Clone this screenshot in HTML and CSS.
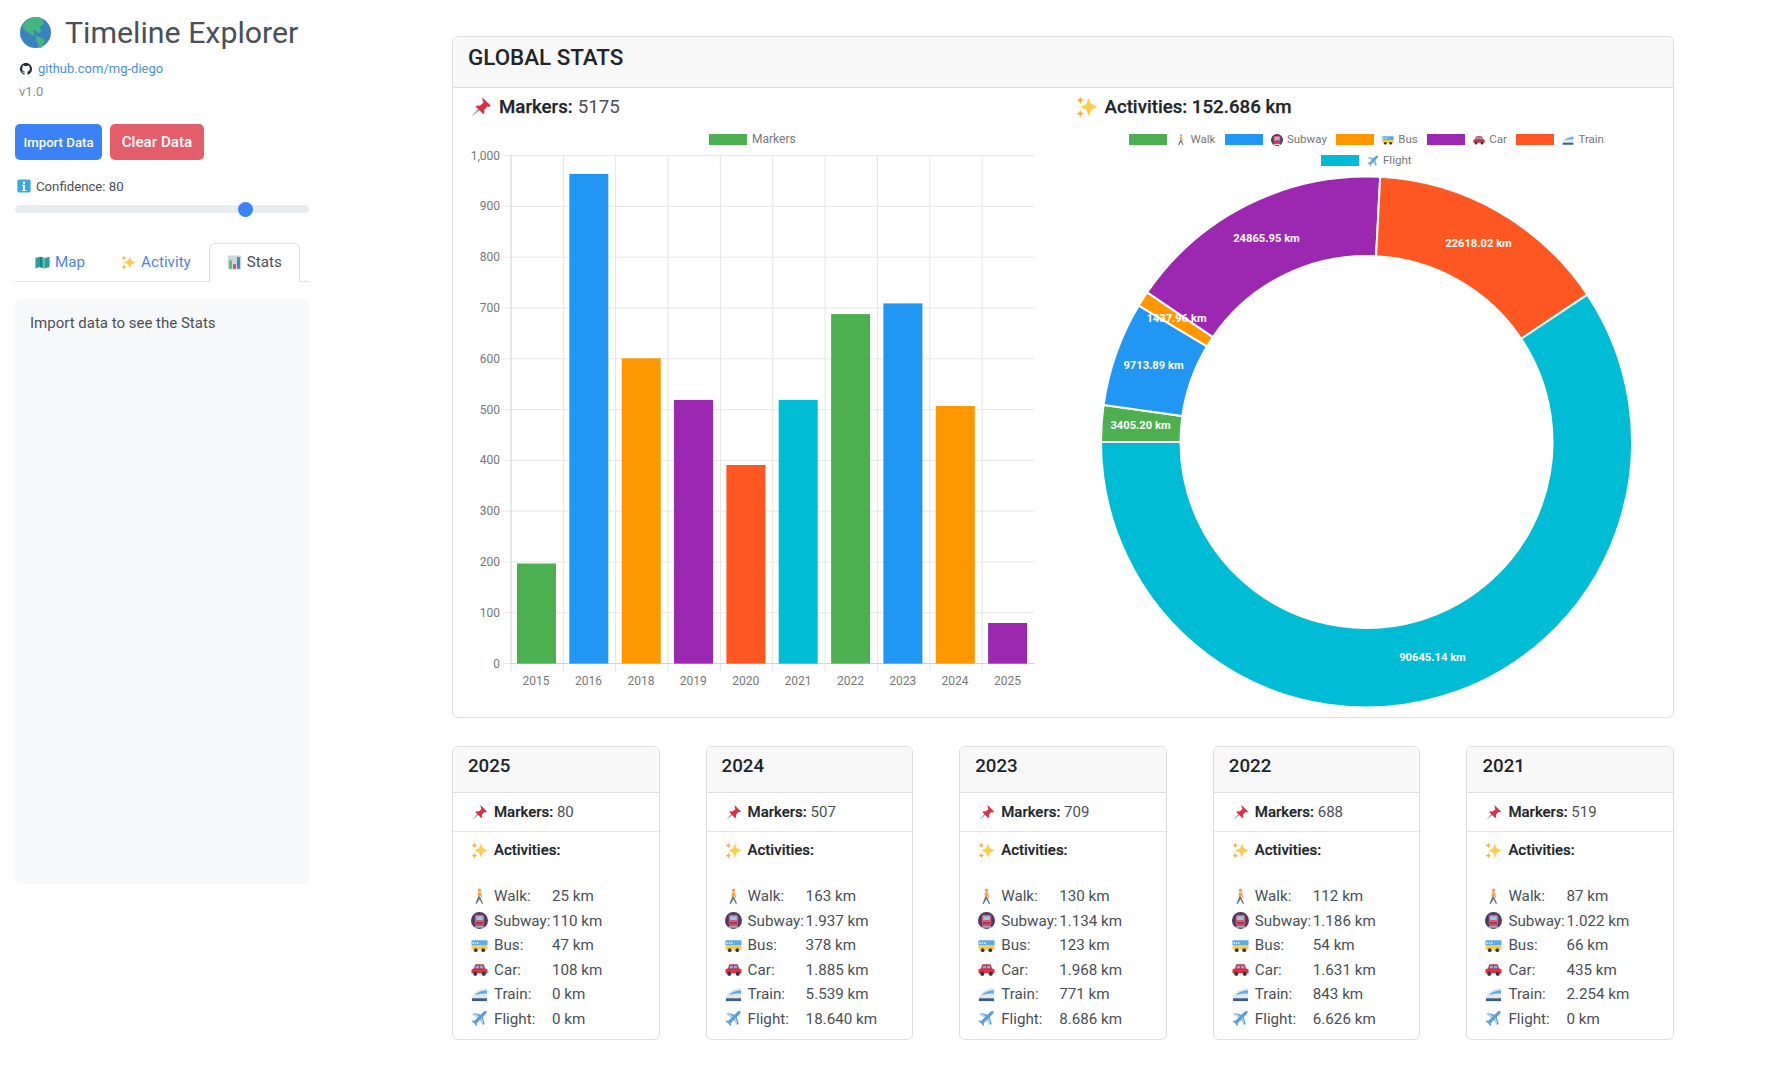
FILE: index.html
```html
<!DOCTYPE html>
<html lang="en">
<head>
<meta charset="utf-8">
<title>Timeline Explorer</title>
<link rel="stylesheet" href="styles.css">
</head>
<body>
<svg class="defs" aria-hidden="true">
  <symbol id="globe" viewBox="0 0 36 36">
    <circle cx="18" cy="18" r="18" fill="#3882c0"/>
    <path d="M8 3.500C11 1.300 15 0 18 0c3 0 6 .8 9 2.500l-1 2.500 2 1-1 3-3 1-1 3 2 3-3 3-2-.5-1-2.500-3-1-1 2 2 2-1 3-3-1-3-3-4-2-2-3-1-3 2-3z" fill="#43b581"/>
    <path d="M18 22l4 1 5 2 2 3-2 3-1 4-3 1-2-5-2-4z" fill="#43b581"/>
  </symbol>
  <symbol id="pin" viewBox="0 0 36 36">
    <path d="M2 34l13-15 3 3z" fill="#99aab5"/>
    <path d="M20 2l14 14-3 2-3-1-5 6c1 3 1 5-1 7L9 17c2-2 4-2 7-1l6-5-1-3z" fill="#dd2e44"/>
  </symbol>
  <symbol id="spark" viewBox="0 0 36 36">
    <path d="M21 3l4 10 10 5-10 5-4 10-4-10-10-5 10-5z" fill="#ffcc4d"/>
    <path d="M7 1l1.800 4.200L13 7 8.800 8.800 7 13 5.200 8.800 1 7l4.200-1.800z" fill="#ffac33"/>
    <path d="M7 23l1.800 4.200L13 29l-4.200 1.800L7 35l-1.800-4.200L1 29l4.200-1.800z" fill="#ffac33"/>
  </symbol>
  <symbol id="walk" viewBox="0 0 36 36">
    <circle cx="18" cy="4.500" r="3.500" fill="#e8a15c"/>
    <path d="M15 9h6l3 11-2 1-2-5-1 3-4 0-1-4z" fill="#f4a34c"/>
    <path d="M15.500 18l4 1 6 14-2.500 1-5-10-6 10-2.500-1z" fill="#66757f"/>
  </symbol>
  <symbol id="subway" viewBox="0 0 36 36">
    <circle cx="18" cy="18" r="18" fill="#4b3a63"/>
    <rect x="8" y="6" width="20" height="23" rx="4" fill="#dd5a72"/>
    <rect x="11" y="9" width="14" height="8" rx="1.500" fill="#8ccaf0"/>
    <rect x="10" y="21" width="16" height="5" fill="#a33a58"/>
    <path d="M9 30h18l2 3H7z" fill="#ccd6dd"/>
  </symbol>
  <symbol id="bus" viewBox="0 0 36 36">
    <rect x="1" y="7" width="34" height="11" rx="2" fill="#55acee"/>
    <path d="M3 11h3v4H3zM8 11h3v4H8zM13 11h3v4h-3z" fill="#e1f0fb"/>
    <path d="M1 18h34v7a2 2 0 0 1-2 2H3a2 2 0 0 1-2-2z" fill="#ffc83d"/>
    <circle cx="10" cy="28" r="4" fill="#31373d"/>
    <circle cx="26" cy="28" r="4" fill="#31373d"/>
  </symbol>
  <symbol id="car" viewBox="0 0 36 36">
    <path d="M8 10c.500-2 2-3 4-3h12c2 0 3.500 1 4 3l2 7H6z" fill="#c5304a"/>
    <path d="M11 10h6v6h-8zM19 10h6l2 6h-8z" fill="#7ab8e6"/>
    <path d="M1 20c0-2 2-4 5-4h24c3 0 5 2 5 4v6H1z" fill="#dd2e44"/>
    <circle cx="9" cy="27" r="4.500" fill="#31373d"/>
    <circle cx="27" cy="27" r="4.500" fill="#31373d"/>
  </symbol>
  <symbol id="train" viewBox="0 0 36 36">
    <path d="M2 26C3 15 14 6 34 5v21z" fill="#e1e8ed"/>
    <path d="M10 17c5-4 13-7 24-8v7c-10 0-17 1-24 3z" fill="#55acee"/>
    <path d="M2 26h32v6H2z" fill="#3b5c85"/>
  </symbol>
  <symbol id="plane" viewBox="0 0 36 36">
    <path d="M33 3c-2-2-5-1-7 1l-6 6L6 6 3 9l11 7-7 7-4-1-2 2 6 4 4 6 2-2-1-4 7-7 7 11 3-3-4-14 6-6c2-2 3-5 2-7z" fill="#5b9fd8"/>
    <path d="M6 6L3 9l11 7 3-3zM23 30l3-3-3-10-3 3z" fill="#bcd7ec"/>
  </symbol>
  <symbol id="map" viewBox="0 0 36 36">
    <path d="M1 7l11-3 12 3 11-3v25l-11 3-12-3-11 3z" fill="#2a9d9e"/>
    <path d="M12 4l6 2v26l-6-3z" fill="#1f7f87"/>
    <path d="M18 6l6 1v25l-6 0z" fill="#5cbdb2"/>
  </symbol>
  <symbol id="chart" viewBox="0 0 36 36">
    <rect x="2" y="1" width="32" height="34" rx="2" fill="#ccd6dd"/>
    <rect x="5" y="13" width="7" height="20" fill="#5dc26f"/>
    <rect x="14.500" y="22" width="7" height="11" fill="#e0457b"/>
    <rect x="24" y="5" width="7" height="28" fill="#3b88c3"/>
  </symbol>
  <symbol id="info" viewBox="0 0 36 36">
    <rect x="1" y="1" width="34" height="34" rx="4" fill="#3aa7e0"/>
    <circle cx="18" cy="9.500" r="3.200" fill="#fff"/>
    <path d="M13 15h7.500v13H24v3H12v-3h3.500V18H13z" fill="#fff"/>
  </symbol>
  <symbol id="github" viewBox="0 0 16 16">
    <path fill="#24292e" d="M8 0C3.580 0 0 3.580 0 8c0 3.540 2.290 6.530 5.470 7.590.400.070.550-.170.550-.380 0-.190-.010-.820-.010-1.490-2.010.370-2.530-.490-2.690-.940-.090-.230-.480-.940-.820-1.130-.280-.150-.680-.520-.010-.530.630-.010 1.080.580 1.230.820.720 1.210 1.870.870 2.330.660.070-.520.280-.870.510-1.070-1.780-.200-3.640-.890-3.640-3.950 0-.870.310-1.590.820-2.150-.080-.200-.360-1.020.080-2.120 0 0 .670-.210 2.200.820.640-.180 1.320-.270 2-.270.680 0 1.360.090 2 .270 1.530-1.040 2.200-.820 2.200-.820.440 1.100.160 1.920.080 2.120.510.560.820 1.270.820 2.150 0 3.070-1.870 3.750-3.650 3.950.290.250.540.730.540 1.480 0 1.070-.010 1.930-.010 2.200 0 .210.150.460.550.380A8.013 8.013 0 0 0 16 8c0-4.420-3.580-8-8-8z"/>
  </symbol>
</svg>

<div class="page">
  <aside class="sidebar">
    <h1 class="title"><svg class="globe"><use href="#globe"/></svg>Timeline Explorer</h1>
    <div class="gh"><svg class="gh-ico"><use href="#github"/></svg><a href="#">github.com/mg-diego</a></div>
    <div class="version">v1.0</div>
    <div class="buttons">
      <button class="btn btn-import">Import Data</button>
      <button class="btn btn-clear">Clear Data</button>
    </div>
    <div class="conf"><svg class="conf-ico"><use href="#info"/></svg>Confidence: 80</div>
    <input class="range" type="range" min="0" max="100" value="80">
    <nav class="tabs">
      <a class="tab" href="#"><svg class="tab-ico"><use href="#map"/></svg>Map</a>
      <a class="tab" href="#"><svg class="tab-ico"><use href="#spark"/></svg>Activity</a>
      <a class="tab active" href="#"><svg class="tab-ico"><use href="#chart"/></svg>Stats</a>
    </nav>
    <div class="panel">Import data to see the Stats</div>
  </aside>

  <main class="main">
    <section class="card global">
      <h2 class="global-head">GLOBAL STATS</h2>
      <div class="global-body">
        <div class="col">
          <h3 class="stat"><svg class="stat-ico"><use href="#pin"/></svg><b>Markers:</b><span class="soft">5175</span></h3>
          <svg class="bars" viewBox="470 128 582 572" role="img" aria-label="Markers per year">
            <g class="grid">
              <path d="M503 155.600H1034.500M503 206.400H1034.500M503 257.200H1034.500M503 308H1034.500M503 358.800H1034.500M503 409.600H1034.500M503 460.400H1034.500M503 511.200H1034.500M503 562H1034.500M503 612.800H1034.500M503 663.600H511"/>
              <path d="M563.350 155.600V671.600M615.700 155.600V671.600M668.050 155.600V671.600M720.400 155.600V671.600M772.750 155.600V671.600M825.100 155.600V671.600M877.450 155.600V671.600M929.800 155.600V671.600M982.150 155.600V671.600M511 663.600V671.600"/>
            </g>
            <path class="axis" d="M511 155.600V663.600H1034.500"/>
            <rect class="c1" x="709" y="134" width="38" height="11"/>
            <text class="lbl" x="752" y="143">Markers</text>
            <rect class="c1" x="517" y="563.500" width="39" height="100.100"/>
            <rect class="c2" x="569.300" y="173.900" width="39" height="489.700"/>
            <rect class="c3" x="621.700" y="358.300" width="39" height="305.300"/>
            <rect class="c4" x="674" y="399.900" width="39" height="263.700"/>
            <rect class="c5" x="726.400" y="465" width="39" height="198.600"/>
            <rect class="c6" x="778.700" y="399.900" width="39" height="263.700"/>
            <rect class="c1" x="831.100" y="314.100" width="39" height="349.500"/>
            <rect class="c2" x="883.400" y="303.400" width="39" height="360.200"/>
            <rect class="c3" x="935.800" y="406" width="39" height="257.600"/>
            <rect class="c4" x="988.100" y="623" width="39" height="40.600"/>
            <g class="lbl yl">
              <text x="500" y="159.600">1,000</text><text x="500" y="210.400">900</text><text x="500" y="261.200">800</text>
              <text x="500" y="312">700</text><text x="500" y="362.800">600</text><text x="500" y="413.600">500</text>
              <text x="500" y="464.400">400</text><text x="500" y="515.200">300</text><text x="500" y="566">200</text>
              <text x="500" y="616.800">100</text><text x="500" y="667.600">0</text>
            </g>
            <g class="lbl xl">
              <text x="536" y="685">2015</text><text x="588.500" y="685">2016</text><text x="641" y="685">2018</text>
              <text x="693.300" y="685">2019</text><text x="745.700" y="685">2020</text><text x="798" y="685">2021</text>
              <text x="850.400" y="685">2022</text><text x="902.700" y="685">2023</text><text x="955" y="685">2024</text>
              <text x="1007.500" y="685">2025</text>
            </g>
          </svg>
        </div>
        <div class="col">
          <h3 class="stat"><svg class="stat-ico"><use href="#spark"/></svg><b>Activities: 152.686 km</b></h3>
          <div class="legend">
            <span class="leg"><i class="sw bg1"></i><svg class="leg-ico"><use href="#walk"/></svg>Walk</span>
            <span class="leg"><i class="sw bg2"></i><svg class="leg-ico"><use href="#subway"/></svg>Subway</span>
            <span class="leg"><i class="sw bg3"></i><svg class="leg-ico"><use href="#bus"/></svg>Bus</span>
            <span class="leg"><i class="sw bg4"></i><svg class="leg-ico"><use href="#car"/></svg>Car</span>
            <span class="leg"><i class="sw bg5"></i><svg class="leg-ico"><use href="#train"/></svg>Train</span>
            <span class="leg"><i class="sw bg6"></i><svg class="leg-ico"><use href="#plane"/></svg>Flight</span>
          </div>
          <svg class="donut" viewBox="-290.500 -268 581 536" role="img" aria-label="Distance per activity">
            <g class="slices">
              <path class="c1" d="M-265.500 0A265.500 265.500 0 0 1-262.900-37.080L-184.180-25.980A186 186 0 0 0-186 0Z"/>
              <path class="c2" d="M-262.900-37.080A265.500 265.500 0 0 1-227.740-136.470L-159.550-95.600A186 186 0 0 0-184.180-25.980Z"/>
              <path class="c3" d="M-227.740-136.470A265.500 265.500 0 0 1-219.280-149.700L-153.620-104.870A186 186 0 0 0-159.550-95.600Z"/>
              <path class="c4" d="M-219.280-149.700A265.500 265.500 0 0 1 13.670-265.150L9.580-185.750A186 186 0 0 0-153.620-104.870Z"/>
              <path class="c5" d="M13.670-265.150A265.500 265.500 0 0 1 220.820-147.410L154.700-103.270A186 186 0 0 0 9.580-185.750Z"/>
              <path class="c6" d="M220.820-147.410A265.500 265.500 0 1 1-265.500 0L-186 0A186 186 0 1 0 154.700-103.270Z"/>
            </g>
            <g class="dl">
              <text x="-226" y="-13.500">3405.20 km</text>
              <text x="-213" y="-73">9713.89 km</text>
              <text x="-190" y="-120">1437.96 km</text>
              <text x="-100" y="-200.500">24865.95 km</text>
              <text x="112" y="-195">22618.02 km</text>
              <text x="66" y="219">90645.14 km</text>
            </g>
          </svg>
        </div>
      </div>
    </section>

    <section class="years">
      <article class="card year">
        <h4 class="year-head">2025</h4>
        <div class="year-row"><svg class="ico"><use href="#pin"/></svg><b>Markers:</b> 80</div>
        <div class="year-acts">
          <div class="acts-title"><svg class="ico"><use href="#spark"/></svg><b>Activities:</b></div>
          <div class="acts">
            <svg class="ico"><use href="#walk"/></svg><span>Walk:</span><span>25 km</span>
            <svg class="ico"><use href="#subway"/></svg><span>Subway:</span><span>110 km</span>
            <svg class="ico"><use href="#bus"/></svg><span>Bus:</span><span>47 km</span>
            <svg class="ico"><use href="#car"/></svg><span>Car:</span><span>108 km</span>
            <svg class="ico"><use href="#train"/></svg><span>Train:</span><span>0 km</span>
            <svg class="ico"><use href="#plane"/></svg><span>Flight:</span><span>0 km</span>
          </div>
        </div>
      </article>
      <article class="card year">
        <h4 class="year-head">2024</h4>
        <div class="year-row"><svg class="ico"><use href="#pin"/></svg><b>Markers:</b> 507</div>
        <div class="year-acts">
          <div class="acts-title"><svg class="ico"><use href="#spark"/></svg><b>Activities:</b></div>
          <div class="acts">
            <svg class="ico"><use href="#walk"/></svg><span>Walk:</span><span>163 km</span>
            <svg class="ico"><use href="#subway"/></svg><span>Subway:</span><span>1.937 km</span>
            <svg class="ico"><use href="#bus"/></svg><span>Bus:</span><span>378 km</span>
            <svg class="ico"><use href="#car"/></svg><span>Car:</span><span>1.885 km</span>
            <svg class="ico"><use href="#train"/></svg><span>Train:</span><span>5.539 km</span>
            <svg class="ico"><use href="#plane"/></svg><span>Flight:</span><span>18.640 km</span>
          </div>
        </div>
      </article>
      <article class="card year">
        <h4 class="year-head">2023</h4>
        <div class="year-row"><svg class="ico"><use href="#pin"/></svg><b>Markers:</b> 709</div>
        <div class="year-acts">
          <div class="acts-title"><svg class="ico"><use href="#spark"/></svg><b>Activities:</b></div>
          <div class="acts">
            <svg class="ico"><use href="#walk"/></svg><span>Walk:</span><span>130 km</span>
            <svg class="ico"><use href="#subway"/></svg><span>Subway:</span><span>1.134 km</span>
            <svg class="ico"><use href="#bus"/></svg><span>Bus:</span><span>123 km</span>
            <svg class="ico"><use href="#car"/></svg><span>Car:</span><span>1.968 km</span>
            <svg class="ico"><use href="#train"/></svg><span>Train:</span><span>771 km</span>
            <svg class="ico"><use href="#plane"/></svg><span>Flight:</span><span>8.686 km</span>
          </div>
        </div>
      </article>
      <article class="card year">
        <h4 class="year-head">2022</h4>
        <div class="year-row"><svg class="ico"><use href="#pin"/></svg><b>Markers:</b> 688</div>
        <div class="year-acts">
          <div class="acts-title"><svg class="ico"><use href="#spark"/></svg><b>Activities:</b></div>
          <div class="acts">
            <svg class="ico"><use href="#walk"/></svg><span>Walk:</span><span>112 km</span>
            <svg class="ico"><use href="#subway"/></svg><span>Subway:</span><span>1.186 km</span>
            <svg class="ico"><use href="#bus"/></svg><span>Bus:</span><span>54 km</span>
            <svg class="ico"><use href="#car"/></svg><span>Car:</span><span>1.631 km</span>
            <svg class="ico"><use href="#train"/></svg><span>Train:</span><span>843 km</span>
            <svg class="ico"><use href="#plane"/></svg><span>Flight:</span><span>6.626 km</span>
          </div>
        </div>
      </article>
      <article class="card year">
        <h4 class="year-head">2021</h4>
        <div class="year-row"><svg class="ico"><use href="#pin"/></svg><b>Markers:</b> 519</div>
        <div class="year-acts">
          <div class="acts-title"><svg class="ico"><use href="#spark"/></svg><b>Activities:</b></div>
          <div class="acts">
            <svg class="ico"><use href="#walk"/></svg><span>Walk:</span><span>87 km</span>
            <svg class="ico"><use href="#subway"/></svg><span>Subway:</span><span>1.022 km</span>
            <svg class="ico"><use href="#bus"/></svg><span>Bus:</span><span>66 km</span>
            <svg class="ico"><use href="#car"/></svg><span>Car:</span><span>435 km</span>
            <svg class="ico"><use href="#train"/></svg><span>Train:</span><span>2.254 km</span>
            <svg class="ico"><use href="#plane"/></svg><span>Flight:</span><span>0 km</span>
          </div>
        </div>
      </article>
    </section>
  </main>
</div>
</body>
</html>
```
FILE: styles.css
```css
* { box-sizing: border-box; }
html, body { margin: 0; padding: 0; background: #fff; }
body { font-family: Roboto, "Liberation Sans", sans-serif; font-size: 16px; color: #495057; overflow: hidden; }
.defs { width: 0; height: 0; position: absolute; }
.page { display: flex; align-items: flex-start; padding-left: 15px; }

/* sidebar */
.sidebar { width: 294px; flex: none; padding-top: 14px; }
.title { display: flex; align-items: center; margin: 0; height: 36px; font-size: 30.300px; font-weight: 400; color: #495057; }
.globe { width: 31px; height: 31px; margin: 0 14px 0 5px; flex: none; }
.gh { display: flex; align-items: center; margin-top: 9px; height: 18px; font-size: 13px; }
.gh-ico { width: 12px; height: 12px; margin: 2px 6px 0 5px; flex: none; }
.gh a { color: #4a90d9; text-decoration: none; }
.version { margin: 6px 0 0 4px; font-size: 13px; line-height: 18px; color: #868e96; }
.buttons { display: flex; gap: 8px; margin-top: 23px; }
.btn { height: 36px; border: 0; border-radius: 5px; color: #fff; font-family: inherit; font-weight: 500; padding: 0; }
.btn-import { width: 87px; background: #3b82f6; font-size: 13.200px; }
.btn-clear { width: 94px; background: #e35d6a; font-size: 15.200px; }
.conf { display: flex; align-items: center; margin: 17px 0 0 2px; height: 18px; font-size: 13.200px; color: #495057; }
.conf-ico { width: 14px; height: 14px; margin-right: 5px; flex: none; }
.range { display: block; width: 100%; height: 16px; margin: 6px 0 0; padding: 0; appearance: none; -webkit-appearance: none; background: transparent; }
.range::-webkit-slider-runnable-track { height: 8px; border-radius: 4px; background: #e9ecef; }
.range::-webkit-slider-thumb { -webkit-appearance: none; appearance: none; width: 15px; height: 15px; margin-top: -3.500px; border: 0; border-radius: 50%; background: #3b82f6; }
.tabs { display: flex; height: 39px; margin-top: 26px; padding-left: 2px; border-bottom: 1px solid #dee2e6; font-size: 15.200px; }
.tab { display: flex; align-items: center; height: 39px; padding: 0 17px 2px; border: 1px solid transparent; border-bottom: 0; color: #4a86e8; text-decoration: none; }
.tab.active { color: #495057; background: #fff; border-color: #dee2e6; border-radius: 6px 6px 0 0; }
.tab-ico { width: 15px; height: 15px; margin-right: 5px; flex: none; }
.panel { height: 585px; margin-top: 17px; padding: 14px 15px; border-radius: 4px; background: #f8f9fa; font-size: 15px; line-height: 20px; }

/* main */
.main { width: 1222px; margin-left: 143px; padding-top: 36px; flex: none; }
.card { border: 1px solid #dedede; border-radius: 6px; background: #fff; overflow: hidden; }
.global { height: 682px; }
.global-head { margin: 0; height: 51px; padding: 6px 15px 0; background: #f8f8f8; border-bottom: 1px solid #dedede; font-size: 22.400px; line-height: 28px; font-weight: 500; color: #212529; }
.global-body { display: flex; padding: 0 3px 0 5px; }
.col { width: 605.500px; padding: 0 12px; flex: none; }
.stat { display: flex; align-items: center; margin: 0; height: 38px; font-size: 18.700px; font-weight: 400; color: #495057; }
.stat b { font-weight: 500; color: #212529; -webkit-text-stroke: .25px #212529; }
.soft { margin-left: 5px; color: #495057; }
.stat-ico { width: 22px; height: 22px; margin: 0 7px 0 0; flex: none; }
.bars { display: block; width: 582px; height: 572px; margin-top: 2px; }
.grid path { fill: none; stroke: #e6e6e6; stroke-width: 1; }
.axis { fill: none; stroke: #cfcfcf; stroke-width: 1; }
.lbl { font-size: 12px; fill: #777; }
.yl { text-anchor: end; }
.xl { text-anchor: middle; }
.c1 { fill: #4caf50; } .c2 { fill: #2196f3; } .c3 { fill: #ff9800; }
.c4 { fill: #9c27b0; } .c5 { fill: #ff5722; } .c6 { fill: #00bcd4; }

.legend { display: flex; flex-wrap: wrap; justify-content: center; align-content: flex-start; column-gap: 9.500px; width: 520px; margin: 3px auto 0; height: 45px; font-size: 11.500px; line-height: 21px; color: #777; }
.leg { display: flex; align-items: center; height: 21px; }
.sw { width: 38px; height: 11px; margin-right: 8px; }
.bg1 { background: #4caf50; } .bg2 { background: #2196f3; } .bg3 { background: #ff9800; }
.bg4 { background: #9c27b0; } .bg5 { background: #ff5722; } .bg6 { background: #00bcd4; }
.leg-ico { width: 12px; height: 12px; margin-right: 4px; flex: none; }
.donut { display: block; width: 581px; height: 536px; }
.slices path { stroke: #fff; stroke-width: 2; }
.dl text { font-size: 11.200px; font-weight: 700; fill: #fff; text-anchor: middle; }

/* year cards */
.years { display: grid; grid-template-columns: repeat(5, 1fr); column-gap: 46px; margin-top: 28px; }
.year { height: 294px; }
.year-head { margin: 0; height: 46px; padding: 6px 15px 0; background: #f8f8f8; border-bottom: 1px solid #dedede; font-size: 18.700px; line-height: 26px; font-weight: 500; color: #212529; }
.year-row { display: flex; align-items: center; height: 39px; padding-left: 18px; border-bottom: 1px solid #e4e4e4; font-size: 15px; white-space: pre; }
.year-row b, .acts-title b { font-weight: 500; color: #212529; -webkit-text-stroke: .2px #212529; }
.ico { width: 17px; height: 17px; margin-right: 6px; flex: none; }
.year-acts { padding: 6px 0 0 18px; }
.acts-title { display: flex; align-items: center; height: 24px; margin-bottom: 22px; font-size: 15px; }
.acts { display: grid; grid-template-columns: 23px 58px auto; grid-auto-rows: 24.500px; align-items: center; justify-content: start; font-size: 15.200px; white-space: nowrap; }
```
